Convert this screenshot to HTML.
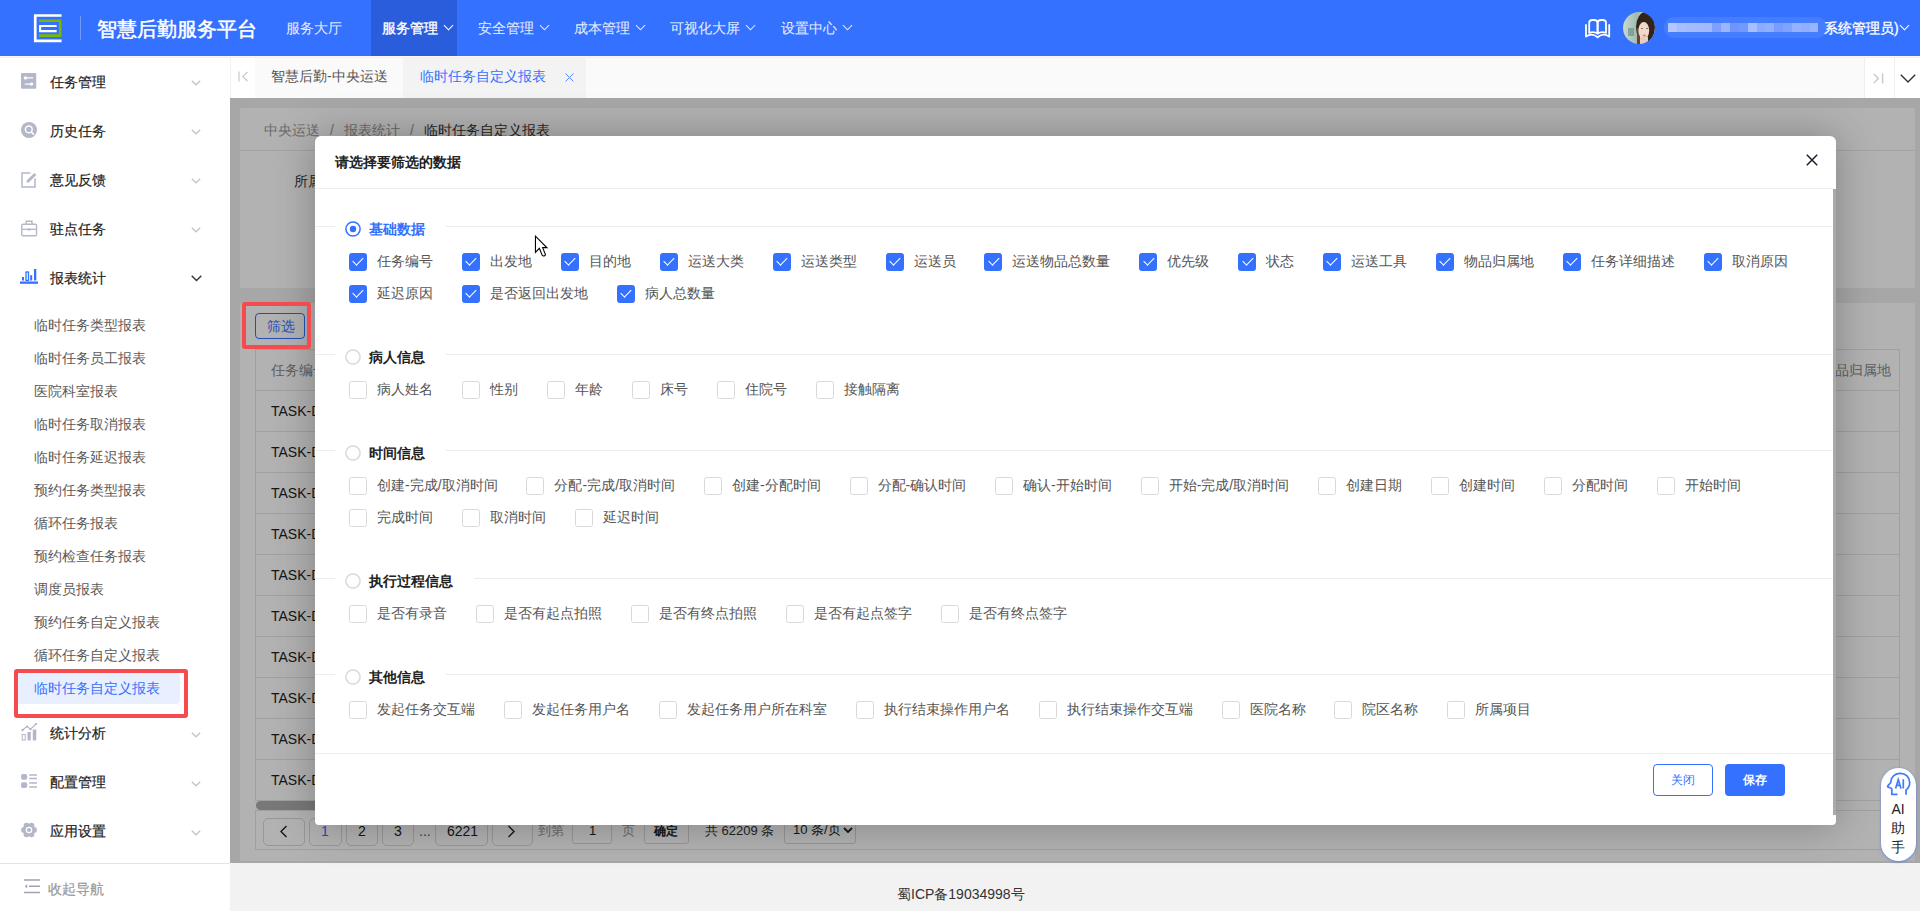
<!DOCTYPE html>
<html><head><meta charset="utf-8">
<style>
*{box-sizing:border-box;margin:0;padding:0}
html,body{width:1920px;height:911px;overflow:hidden;background:#fff;font-family:"Liberation Sans",sans-serif;font-size:14px;color:#333}
.abs{position:absolute}
.t{position:absolute;white-space:nowrap;line-height:1}
/* header */
#hdr{position:absolute;left:0;top:0;width:1920px;height:56px;background:#3471ff}
.nav{position:absolute;top:21px;font-size:14px;line-height:14px;color:rgba(255,255,255,.85);white-space:nowrap;-webkit-text-stroke:0.15px rgba(255,255,255,.6)}
.chev{position:absolute;width:7px;height:7px;border-right:1.5px solid currentColor;border-bottom:1.5px solid currentColor;transform:rotate(45deg)}
/* sidebar */
#side{position:absolute;left:0;top:56px;width:230px;height:855px;background:#fff}
.mi{position:absolute;left:50px;font-size:14px;line-height:14px;color:#222;white-space:nowrap;-webkit-text-stroke-width:0.2px}
.si{position:absolute;left:34px;font-size:14px;line-height:14px;color:#5a5a5a;white-space:nowrap}
.mchev{position:absolute;left:193px;width:7px;height:7px;border-right:1px solid #c4c4c4;border-bottom:1px solid #c4c4c4;transform:rotate(45deg)}
/* tabs */
#tabs{position:absolute;left:230px;top:56px;width:1690px;height:42px;background:#fafafa}
/* main */
#main{position:absolute;left:230px;top:98px;width:1690px;height:765px;background:#f0f0f0}
.card{position:absolute;background:#fff;border-radius:2px}
#foot{position:absolute;left:230px;top:863px;width:1690px;height:48px;background:#f2f2f2}
#mask{position:absolute;left:230px;top:98px;width:1690px;height:765px;background:rgba(0,0,0,.3)}
/* dialog */
#dlg{position:absolute;left:315px;top:136px;width:1521px;height:689px;background:#fff;border-radius:6px 6px 4px 4px;box-shadow:0 0 42px rgba(0,0,0,.28)}
.sec{position:absolute;left:0;width:1518px;height:1px;background:#ececec}
.sec .lbl{position:absolute;left:20px;top:-8px;height:16px;background:#fff;padding:0 20px 0 10px}
.radio{position:absolute;left:31px;width:15px;height:15px;border-radius:50%;border:1.6px solid #d9d9d9;background:#fff}
.radio.on{border-color:#3471ff;border-width:1.8px}
.radio.on:after{content:"";position:absolute;left:2.7px;top:2.7px;width:6px;height:6px;border-radius:50%;background:#3471ff}
.stitle{position:absolute;left:54px;font-size:14px;line-height:14px;font-weight:bold;color:#222;white-space:nowrap}
.grp{position:absolute;left:34px;width:1480px;display:flex;flex-wrap:wrap;row-gap:14px}
.ck{display:flex;align-items:center;height:18px;margin-right:28.92px;white-space:nowrap;font-size:14px;color:#555}
.box{width:18px;height:18px;border:1px solid #d9d9d9;border-radius:2.5px;margin-right:10px;position:relative;flex:none;background:#fff}
.ck.on .box{background:#3471ff;border-color:#3471ff}
.ck.on .box:after{content:"";position:absolute;left:5.3px;top:0.9px;width:5px;height:8.8px;border-right:1.5px solid #fff;border-bottom:1.5px solid #fff;transform:rotate(45deg)}
.btn{position:absolute;height:32px;width:60px;border-radius:4px;font-size:12px;line-height:30px;text-align:center}
</style></head><body>

<!-- HEADER -->
<div id="hdr">
  <svg class="abs" style="left:33px;top:14px" width="30" height="29" viewBox="0 0 30 29">
    <path d="M28.6 1.5H2.25V26.85H28.6" fill="none" stroke="#fff" stroke-width="2.7"/>
    <path d="M6 6.75H27.2V21.6H6" fill="none" stroke="#7ab800" stroke-width="2.6"/>
    <path d="M23.65 12H7.1V17.15H23.65" fill="none" stroke="#fff" stroke-width="2.1"/>
  </svg>
  <div class="abs" style="left:80px;top:16px;width:1px;height:24px;background:rgba(255,255,255,.3)"></div>
  <div class="t" style="left:97px;top:19px;font-size:20px;color:#fff;-webkit-text-stroke:0.5px #fff">智慧后勤服务平台</div>
  <div class="nav" style="left:286px">服务大厅</div>
  <div class="abs" style="left:371px;top:0;width:86px;height:56px;background:#2a5ddb"></div>
  <div class="nav" style="left:382px;color:#fff;-webkit-text-stroke:0.35px #fff">服务管理</div><div class="chev" style="left:445px;top:22px;color:#fff"></div>
  <div class="nav" style="left:478px">安全管理</div><div class="chev" style="left:541px;top:22px;color:rgba(255,255,255,.85)"></div>
  <div class="nav" style="left:574px">成本管理</div><div class="chev" style="left:637px;top:22px;color:rgba(255,255,255,.85)"></div>
  <div class="nav" style="left:670px">可视化大屏</div><div class="chev" style="left:747px;top:22px;color:rgba(255,255,255,.85)"></div>
  <div class="nav" style="left:781px">设置中心</div><div class="chev" style="left:844px;top:22px;color:rgba(255,255,255,.85)"></div>

  <svg class="abs" style="left:1580px;top:14px" width="36" height="28" viewBox="0 0 36 28">
    <path d="M6 10.2V22.6C9.5 20 13.5 19.8 17.6 23.2C21.7 19.8 25.7 20 29.2 22.6V10.2" fill="none" stroke="#fff" stroke-width="1.8" stroke-linejoin="round"/>
    <path d="M9.2 18.8V8.6C9.2 6.8 10.6 6 12.5 6H14C16.2 6 17.6 7 17.6 8.8V19.6C15.2 18 12 17.8 9.2 18.8Z" fill="none" stroke="#fff" stroke-width="1.8" stroke-linejoin="round"/>
    <path d="M26 18.8V8.6C26 6.8 24.6 6 22.7 6H21.2C19 6 17.6 7 17.6 8.8V19.6C20 18 23.2 17.8 26 18.8Z" fill="none" stroke="#fff" stroke-width="1.8" stroke-linejoin="round"/>
  </svg>
  <svg class="abs" style="left:1623px;top:12px" width="32" height="32" viewBox="0 0 32 32">
    <defs><clipPath id="av"><circle cx="16" cy="16" r="16"/></clipPath>
    <linearGradient id="avbg" x1="0" y1="0" x2="1" y2="0"><stop offset="0" stop-color="#c9d9d2"/><stop offset=".45" stop-color="#9fbab0"/><stop offset=".6" stop-color="#c4d2cf"/></linearGradient></defs>
    <g clip-path="url(#av)"><g style="filter:blur(.6px)">
      <rect width="32" height="32" fill="url(#avbg)"/>
      <rect x="5" y="16" width="6" height="8" fill="#5f8c80" opacity=".6"/>
      <ellipse cx="22.5" cy="15" rx="9.5" ry="15" fill="#33241b"/>
      <rect x="14" y="16" width="4" height="16" fill="#6a4328"/>
      <ellipse cx="20.8" cy="18.5" rx="5.4" ry="8.5" fill="#efd9c9"/>
      <rect x="17" y="25" width="8" height="7" fill="#e9cdb8"/>
      <ellipse cx="19" cy="16.5" rx="1" ry=".6" fill="#6b5048"/><ellipse cx="24" cy="16.5" rx="1" ry=".6" fill="#6b5048"/>
      <ellipse cx="21.3" cy="23.5" rx="1.8" ry="1" fill="#d98a8a"/>
    </g></g>
  </svg>
  <div class="abs" style="left:1664px;top:17px;width:163px;height:21px;border-radius:10px;background:rgba(255,255,255,.09)"></div>
  <div class="abs" style="left:1668.00px;top:22.9px;width:8.9px;height:8.9px;background:#b4c6ff"></div>
  <div class="abs" style="left:1676.85px;top:22.9px;width:8.9px;height:8.9px;background:#a6bdff"></div>
  <div class="abs" style="left:1685.70px;top:22.9px;width:8.9px;height:8.9px;background:#a4bbff"></div>
  <div class="abs" style="left:1694.55px;top:22.9px;width:8.9px;height:8.9px;background:#a2baff"></div>
  <div class="abs" style="left:1703.40px;top:22.9px;width:8.9px;height:8.9px;background:#a1b9ff"></div>
  <div class="abs" style="left:1712.25px;top:22.9px;width:8.9px;height:8.9px;background:#7fa0ff"></div>
  <div class="abs" style="left:1721.10px;top:22.9px;width:8.9px;height:8.9px;background:#9bb6ff"></div>
  <div class="abs" style="left:1729.95px;top:22.9px;width:8.9px;height:8.9px;background:#6f94ff"></div>
  <div class="abs" style="left:1738.80px;top:22.9px;width:8.9px;height:8.9px;background:#7398ff"></div>
  <div class="abs" style="left:1747.65px;top:22.9px;width:8.9px;height:8.9px;background:#a5bfff"></div>
  <div class="abs" style="left:1756.50px;top:22.9px;width:8.9px;height:8.9px;background:#8aabff"></div>
  <div class="abs" style="left:1765.35px;top:22.9px;width:8.9px;height:8.9px;background:#8fb0ff"></div>
  <div class="abs" style="left:1774.20px;top:22.9px;width:8.9px;height:8.9px;background:#789cff"></div>
  <div class="abs" style="left:1783.05px;top:22.9px;width:8.9px;height:8.9px;background:#80a3ff"></div>
  <div class="abs" style="left:1791.90px;top:22.9px;width:8.9px;height:8.9px;background:#96b1ff"></div>
  <div class="abs" style="left:1800.75px;top:22.9px;width:8.9px;height:8.9px;background:#90aeff"></div>
  <div class="abs" style="left:1809.60px;top:22.9px;width:8.9px;height:8.9px;background:#98b4ff"></div>
  <div class="t" style="left:1824px;top:21px;font-size:14px;color:#fff;-webkit-text-stroke:0.3px #fff">系统管理员)</div>
  <div class="chev" style="left:1901px;top:22px;color:#fff"></div>
</div>

<!-- SIDEBAR -->
<div id="side">
  <!-- icons: coordinates relative to sidebar top 56 -->
  <svg class="abs" style="left:21px;top:17px" width="16" height="16" viewBox="0 0 16 16">
    <rect x="0" y="0" width="15.2" height="15.7" rx="1.2" fill="#b3b7c8"/>
    <path d="M4 4.9H12M3.8 11.1H11.5" stroke="#fff" stroke-width="1.3"/>
    <circle cx="4.4" cy="4.9" r="1.7" fill="#fff"/><circle cx="10.6" cy="11.1" r="1.7" fill="#fff"/>
  </svg>
  <svg class="abs" style="left:21px;top:66px" width="16" height="16" viewBox="0 0 16 16">
    <circle cx="8" cy="8" r="8" fill="#b3b7c8"/>
    <circle cx="7.8" cy="7.4" r="3.4" fill="none" stroke="#fff" stroke-width="1.5"/>
    <path d="M10.2 9.8L13 12.8" stroke="#fff" stroke-width="1.6"/>
  </svg>
  <svg class="abs" style="left:21px;top:115px" width="17" height="17" viewBox="0 0 17 17">
    <path d="M9.5 2H1V16H14V7.5" fill="none" stroke="#b3b7c8" stroke-width="1.5"/>
    <path d="M5.5 11.8L6 9.2L13.3 1.9L15.3 3.9L8 11.2Z" fill="#b3b7c8"/>
  </svg>
  <svg class="abs" style="left:21px;top:164px" width="17" height="17" viewBox="0 0 17 17">
    <rect x="0.75" y="4.2" width="14.8" height="11.5" rx="1.2" fill="none" stroke="#b3b7c8" stroke-width="1.4"/>
    <path d="M5.2 4.2V1.2H11V4.2" fill="none" stroke="#b3b7c8" stroke-width="1.4"/>
    <path d="M1 9.3H15.5" stroke="#b3b7c8" stroke-width="1.3"/>
    <rect x="6.6" y="8.5" width="3" height="2" fill="#b3b7c8"/>
  </svg>
  <svg class="abs" style="left:20px;top:213px" width="19" height="16" viewBox="0 0 19 16">
    <rect x="2" y="8" width="2" height="3.5" fill="#3471ff"/>
    <rect x="6" y="3" width="2.5" height="8.5" fill="none" stroke="#3471ff" stroke-width="1.3"/>
    <rect x="10.2" y="6.2" width="2" height="5.3" fill="#3471ff"/>
    <rect x="14" y="0" width="2.3" height="11.5" fill="#3471ff"/>
    <rect x="0" y="12.5" width="18" height="2.3" fill="#3471ff"/>
  </svg>
  <svg class="abs" style="left:21px;top:667px" width="17" height="18" viewBox="0 0 17 18">
    <path d="M1.5 7L6 3.5L9.5 6.2L15 1" fill="none" stroke="#b3b7c8" stroke-width="1.1"/>
    <circle cx="1.5" cy="7" r="1.2" fill="#b3b7c8"/><circle cx="6" cy="3.5" r="1.1" fill="#b3b7c8"/><circle cx="9.5" cy="6.2" r="1.1" fill="#b3b7c8"/><circle cx="15" cy="1" r="1.1" fill="#b3b7c8"/>
    <rect x="1.2" y="11.5" width="3" height="5.6" fill="none" stroke="#b3b7c8" stroke-width="1"/>
    <rect x="6.5" y="9" width="3.3" height="8.4" fill="#b3b7c8"/>
    <rect x="11.8" y="6.5" width="3.5" height="10.9" fill="#b3b7c8"/>
  </svg>
  <svg class="abs" style="left:21px;top:718px" width="17" height="15" viewBox="0 0 17 15">
    <rect x="0" y="0" width="6.2" height="5.8" rx="2" fill="#b3b7c8"/><rect x="0" y="8.2" width="6.2" height="5.8" rx="2" fill="#b3b7c8"/>
    <path d="M8.2 0.9H16M8.2 4.6H16M8.2 9H16M8.2 13.1H16" stroke="#b3b7c8" stroke-width="1.5"/>
  </svg>
  <svg class="abs" style="left:21px;top:766px" width="16" height="16" viewBox="0 0 16 16">
    <circle cx="13.00" cy="8.00" r="2.9" fill="#b3b7c8"/><circle cx="10.50" cy="12.33" r="2.9" fill="#b3b7c8"/><circle cx="5.50" cy="12.33" r="2.9" fill="#b3b7c8"/><circle cx="3.00" cy="8.00" r="2.9" fill="#b3b7c8"/><circle cx="5.50" cy="3.67" r="2.9" fill="#b3b7c8"/><circle cx="10.50" cy="3.67" r="2.9" fill="#b3b7c8"/><circle cx="8" cy="8" r="5.6" fill="#b3b7c8"/>
    <circle cx="8" cy="8" r="2.7" fill="none" stroke="#fff" stroke-width="1.2"/>
  </svg>
  <div class="mi" style="top:19px">任务管理</div>
  <div class="mi" style="top:68px">历史任务</div>
  <div class="mi" style="top:117px">意见反馈</div>
  <div class="mi" style="top:166px">驻点任务</div>
  <div class="mi" style="top:215px">报表统计</div>
  <svg class="abs mch" style="left:191px;top:24px" width="10" height="6"><path d="M0.8 0.8L5 4.8L9.2 0.8" fill="none" stroke="#c4c4c4" stroke-width="1.3"/></svg>
  <svg class="abs mch" style="left:191px;top:73px" width="10" height="6"><path d="M0.8 0.8L5 4.8L9.2 0.8" fill="none" stroke="#c4c4c4" stroke-width="1.3"/></svg>
  <svg class="abs mch" style="left:191px;top:122px" width="10" height="6"><path d="M0.8 0.8L5 4.8L9.2 0.8" fill="none" stroke="#c4c4c4" stroke-width="1.3"/></svg>
  <svg class="abs mch" style="left:191px;top:171px" width="10" height="6"><path d="M0.8 0.8L5 4.8L9.2 0.8" fill="none" stroke="#c4c4c4" stroke-width="1.3"/></svg>
  <svg class="abs mch" style="left:191px;top:219px" width="11" height="7"><path d="M0.7 0.7L5.5 5.5L10.3 0.7" fill="none" stroke="#333" stroke-width="1.4"/></svg>
  <div class="si" style="top:262px">临时任务类型报表</div>
  <div class="si" style="top:295px">临时任务员工报表</div>
  <div class="si" style="top:328px">医院科室报表</div>
  <div class="si" style="top:361px">临时任务取消报表</div>
  <div class="si" style="top:394px">临时任务延迟报表</div>
  <div class="si" style="top:427px">预约任务类型报表</div>
  <div class="si" style="top:460px">循环任务报表</div>
  <div class="si" style="top:493px">预约检查任务报表</div>
  <div class="si" style="top:526px">调度员报表</div>
  <div class="si" style="top:559px">预约任务自定义报表</div>
  <div class="si" style="top:592px">循环任务自定义报表</div>
  <div class="abs" style="left:18px;top:617px;width:162px;height:31px;background:#e8efff;border-radius:0 4px 4px 0"></div>
  <div class="si" style="top:625px;color:#3471ff">临时任务自定义报表</div>
  <div class="mi" style="top:670px">统计分析</div>
  <div class="mi" style="top:719px">配置管理</div>
  <div class="mi" style="top:768px">应用设置</div>
  <svg class="abs mch" style="left:191px;top:676px" width="10" height="6"><path d="M0.8 0.8L5 4.8L9.2 0.8" fill="none" stroke="#c4c4c4" stroke-width="1.3"/></svg>
  <svg class="abs mch" style="left:191px;top:725px" width="10" height="6"><path d="M0.8 0.8L5 4.8L9.2 0.8" fill="none" stroke="#c4c4c4" stroke-width="1.3"/></svg>
  <svg class="abs mch" style="left:191px;top:774px" width="10" height="6"><path d="M0.8 0.8L5 4.8L9.2 0.8" fill="none" stroke="#c4c4c4" stroke-width="1.3"/></svg>
  <div class="abs" style="left:0;top:807px;width:230px;height:1px;background:#e4e4e4"></div>
  <svg class="abs" style="left:24px;top:823px" width="16" height="15" viewBox="0 0 16 15">
    <path d="M0 1H16M5 7.3H16M0 13.6H16" stroke="#a0a4b0" stroke-width="1.5"/>
    <path d="M3.2 5.3L0.6 7.3L3.2 9.3Z" fill="#a0a4b0"/>
  </svg>
  <div class="mi" style="left:48px;top:826px;color:#999">收起导航</div>
</div>

<!-- TABS -->
<div id="tabs">
  <div class="abs" style="left:0;top:0;width:25px;height:42px;background:#fff;border-left:1px solid #f2f2f2"></div>
  <svg class="abs" style="left:8px;top:15px" width="11" height="11" viewBox="0 0 11 11"><path d="M1 0.5V10.5" stroke="#c8c8c8" stroke-width="1.2"/><path d="M9.5 0.8L4.8 5.5L9.5 10.2" fill="none" stroke="#c8c8c8" stroke-width="1.2"/></svg>
  <div class="t" style="left:41px;top:13px;font-size:14px;color:#555">智慧后勤-中央运送</div>
  <div class="abs" style="left:173px;top:0;width:183px;height:42px;background:#f3f3f3"></div>
  <div class="t" style="left:190px;top:13px;font-size:14px;color:#3471ff">临时任务自定义报表</div>
  <svg class="abs" style="left:335px;top:17px" width="9" height="9" viewBox="0 0 9 9"><path d="M0.5 0.5L8.5 8.5M8.5 0.5L0.5 8.5" stroke="#5b8cff" stroke-width="1"/></svg>
  <div class="abs" style="left:1634px;top:0;width:56px;height:42px;background:#fff;border-left:1px solid #eeeeee"></div>
  <div class="abs" style="left:1664px;top:0;width:1px;height:42px;background:#eeeeee"></div>
  <svg class="abs" style="left:1643px;top:16.5px" width="11" height="11" viewBox="0 0 11 11"><path d="M9.6 0.5V10.5" stroke="#cacaca" stroke-width="1.5"/><path d="M0.9 0.9L5.3 5.5L0.9 10.1" fill="none" stroke="#cacaca" stroke-width="1.5"/></svg>
  <svg class="abs" style="left:1670px;top:17.6px" width="16" height="9" viewBox="0 0 16 9"><path d="M0.8 0.8L8 8L15.2 0.8" fill="none" stroke="#333" stroke-width="1.4"/></svg>
</div>

<div class="abs" style="left:0;top:56px;width:1920px;height:1px;background:#fcf8f1"></div><div class="abs" style="left:0;top:57px;width:1920px;height:1px;background:#f1f1f1"></div>
<!-- MAIN -->
<div id="main">
  <div class="card" style="left:10px;top:10px;width:1675px;height:180px">
    <div class="t" style="left:24px;top:15px;color:#999">中央运送</div>
    <div class="t" style="left:90px;top:15px;color:#999">/</div>
    <div class="t" style="left:104px;top:15px;color:#999">报表统计</div>
    <div class="t" style="left:170px;top:15px;color:#999">/</div>
    <div class="t" style="left:184px;top:15px;color:#333">临时任务自定义报表</div>
    <div class="abs" style="left:0;top:42px;width:1675px;height:1px;background:#eaeaea"></div>
    <div class="t" style="left:54px;top:66px;color:#333">所属项目</div>
  </div>
  <div class="card" style="left:10px;top:205px;width:1675px;height:558px">
    <div class="abs" style="left:15px;top:10px;width:50px;height:26px;border:1px solid #3471ff;border-radius:4px"></div>
    <div class="t" style="left:27px;top:16px;color:#3471ff">筛选</div>
  </div>
  <div class="abs" style="left:25px;top:251px;width:1644.5px;height:452px;border:1px solid #e6e6e6;border-bottom:none"></div>
  <div class="abs" style="left:26px;top:292px;width:1643px;height:1px;background:#e6e6e6"></div>
  <div class="abs" style="left:26px;top:333px;width:1643px;height:1px;background:#e6e6e6"></div>
  <div class="abs" style="left:26px;top:374px;width:1643px;height:1px;background:#e6e6e6"></div>
  <div class="abs" style="left:26px;top:415px;width:1643px;height:1px;background:#e6e6e6"></div>
  <div class="abs" style="left:26px;top:456px;width:1643px;height:1px;background:#e6e6e6"></div>
  <div class="abs" style="left:26px;top:497px;width:1643px;height:1px;background:#e6e6e6"></div>
  <div class="abs" style="left:26px;top:538px;width:1643px;height:1px;background:#e6e6e6"></div>
  <div class="abs" style="left:26px;top:579px;width:1643px;height:1px;background:#e6e6e6"></div>
  <div class="abs" style="left:26px;top:620px;width:1643px;height:1px;background:#e6e6e6"></div>
  <div class="abs" style="left:26px;top:661px;width:1643px;height:1px;background:#e6e6e6"></div>
  <div class="abs" style="left:26px;top:702px;width:1643px;height:1px;background:#e6e6e6"></div>
  <div class="t" style="left:41px;top:265px;color:#888">任务编号</div>
  <div class="t" style="left:1591px;top:265px;color:#888">物品归属地</div>
  <div class="t" style="left:41px;top:306px;color:#222">TASK-D202401010000</div>
  <div class="t" style="left:41px;top:347px;color:#222">TASK-D202401010001</div>
  <div class="t" style="left:41px;top:388px;color:#222">TASK-D202401010002</div>
  <div class="t" style="left:41px;top:429px;color:#222">TASK-D202401010003</div>
  <div class="t" style="left:41px;top:470px;color:#222">TASK-D202401010004</div>
  <div class="t" style="left:41px;top:511px;color:#222">TASK-D202401010005</div>
  <div class="t" style="left:41px;top:552px;color:#222">TASK-D202401010006</div>
  <div class="t" style="left:41px;top:593px;color:#222">TASK-D202401010007</div>
  <div class="t" style="left:41px;top:634px;color:#222">TASK-D202401010008</div>
  <div class="t" style="left:41px;top:675px;color:#222">TASK-D202401010009</div>
  <div class="abs" style="left:26px;top:703px;width:400px;height:9px;border-radius:5px;background:#acacac"></div><div class="abs" style="left:26px;top:712px;width:1643px;height:1px;background:#e6e6e6"></div>
  <div class="abs" style="left:25px;top:712px;width:1644.5px;height:40px;border:1px solid #e6e6e6;border-top:none"></div>
  <div class="abs" style="left:33px;top:720px;width:42px;height:28px;border:1px solid #d9d9d9;border-radius:5px"></div>
  <svg class="abs" style="left:49px;top:727px" width="9" height="13"><path d="M7.5 1L2 6.5L7.5 12" fill="none" stroke="#222" stroke-width="1.4"/></svg>
  <div class="abs" style="left:79px;top:720px;width:33px;height:28px;border:1px solid #d9d9d9;border-radius:5px"></div>
  <div class="t" style="left:91px;top:726px;color:#3471ff">1</div>
  <div class="abs" style="left:116px;top:720px;width:32px;height:28px;border:1px solid #d9d9d9;border-radius:5px"></div>
  <div class="t" style="left:128px;top:726px;color:#222">2</div>
  <div class="abs" style="left:152px;top:720px;width:32px;height:28px;border:1px solid #d9d9d9;border-radius:5px"></div>
  <div class="t" style="left:164px;top:726px;color:#222">3</div>
  <div class="t" style="left:189px;top:726px;color:#555">...</div>
  <div class="abs" style="left:205px;top:720px;width:53px;height:28px;border:1px solid #d9d9d9;border-radius:5px"></div>
  <div class="t" style="left:217px;top:726px;color:#222">6221</div>
  <div class="abs" style="left:262px;top:720px;width:41px;height:28px;border:1px solid #d9d9d9;border-radius:5px"></div>
  <svg class="abs" style="left:277px;top:727px" width="9" height="13"><path d="M1.5 1L7 6.5L1.5 12" fill="none" stroke="#222" stroke-width="1.4"/></svg>
  <div class="t" style="left:308px;top:726px;font-size:13px;color:#999">到第</div>
  <div class="abs" style="left:342px;top:720px;width:40px;height:26px;border:1px solid #d9d9d9;border-radius:3px"></div>
  <div class="t" style="left:359px;top:726px;font-size:13px;color:#222">1</div>
  <div class="t" style="left:392px;top:726px;font-size:13px;color:#999">页</div>
  <div class="abs" style="left:414px;top:720px;width:45px;height:26px;border:1px solid #d9d9d9;border-radius:3px"></div>
  <div class="t" style="left:424px;top:727px;font-size:12px;color:#222;font-weight:bold">确定</div>
  <div class="t" style="left:475px;top:726px;font-size:13px;color:#333">共 62209 条</div>
  <div class="abs" style="left:554px;top:720px;width:72px;height:26px;border:1px solid #d9d9d9;border-radius:3px"></div>
  <div class="t" style="left:563px;top:725px;font-size:13px;color:#222">10 条/页</div>
  <svg class="abs" style="left:613px;top:729px" width="10" height="7"><path d="M1 1L5 5L9 1" fill="none" stroke="#222" stroke-width="1.8"/></svg>
</div>
<div id="foot"><div class="t" style="left:667px;top:24px;font-size:14px;color:#333">蜀ICP备19034998号</div></div>
<div id="mask"></div>

<!-- DIALOG -->
<div id="dlg">
  <div class="t" style="left:20px;top:19px;font-weight:bold;color:#222">请选择要筛选的数据</div>
  <svg class="abs" style="left:1491px;top:18px" width="12" height="12" viewBox="0 0 12 12"><path d="M0.8 0.8L11.2 11.2M11.2 0.8L0.8 11.2" stroke="#1d1d2b" stroke-width="1.5"/></svg>
  <div class="abs" style="left:0;top:52px;width:1518px;height:1px;background:#ececec"></div>
  <div class="abs" style="left:1518px;top:53px;width:3px;height:626px;background:#a9a9a9"></div>
  <div class="abs" style="left:0;top:90px;width:20px;height:1px;background:#ededed"></div>
  <div class="abs" style="left:130.5px;top:90px;width:1387.5px;height:1px;background:#ededed"></div>
  <svg class="abs" style="left:30.1px;top:84.85px" width="16" height="16" viewBox="0 0 16 16"><circle cx="8" cy="8" r="7.1" fill="#fff" stroke="#3471ff" stroke-width="1.5"/><circle cx="8" cy="8" r="3.2" fill="#3471ff"/></svg>
  <div class="stitle" style="top:86px;color:#3471ff">基础数据</div>
  <div class="grp" style="top:117px"><div class="ck on"><span class="box"></span>任务编号</div><div class="ck on"><span class="box"></span>出发地</div><div class="ck on"><span class="box"></span>目的地</div><div class="ck on"><span class="box"></span>运送大类</div><div class="ck on"><span class="box"></span>运送类型</div><div class="ck on"><span class="box"></span>运送员</div><div class="ck on"><span class="box"></span>运送物品总数量</div><div class="ck on"><span class="box"></span>优先级</div><div class="ck on"><span class="box"></span>状态</div><div class="ck on"><span class="box"></span>运送工具</div><div class="ck on"><span class="box"></span>物品归属地</div><div class="ck on"><span class="box"></span>任务详细描述</div><div class="ck on"><span class="box"></span>取消原因</div><div class="ck on"><span class="box"></span>延迟原因</div><div class="ck on"><span class="box"></span>是否返回出发地</div><div class="ck on"><span class="box"></span>病人总数量</div></div>
  <div class="abs" style="left:0;top:218px;width:20px;height:1px;background:#ededed"></div>
  <div class="abs" style="left:130.5px;top:218px;width:1387.5px;height:1px;background:#ededed"></div>
  <svg class="abs" style="left:30.1px;top:212.85px" width="16" height="16" viewBox="0 0 16 16"><circle cx="8" cy="8" r="7.1" fill="#fff" stroke="#d9d9d9" stroke-width="1.5"/></svg>
  <div class="stitle" style="top:214px;">病人信息</div>
  <div class="grp" style="top:245px"><div class="ck"><span class="box"></span>病人姓名</div><div class="ck"><span class="box"></span>性别</div><div class="ck"><span class="box"></span>年龄</div><div class="ck"><span class="box"></span>床号</div><div class="ck"><span class="box"></span>住院号</div><div class="ck"><span class="box"></span>接触隔离</div></div>
  <div class="abs" style="left:0;top:314px;width:20px;height:1px;background:#ededed"></div>
  <div class="abs" style="left:130.5px;top:314px;width:1387.5px;height:1px;background:#ededed"></div>
  <svg class="abs" style="left:30.1px;top:308.85px" width="16" height="16" viewBox="0 0 16 16"><circle cx="8" cy="8" r="7.1" fill="#fff" stroke="#d9d9d9" stroke-width="1.5"/></svg>
  <div class="stitle" style="top:310px;">时间信息</div>
  <div class="grp" style="top:341px"><div class="ck"><span class="box"></span>创建-完成/取消时间</div><div class="ck"><span class="box"></span>分配-完成/取消时间</div><div class="ck"><span class="box"></span>创建-分配时间</div><div class="ck"><span class="box"></span>分配-确认时间</div><div class="ck"><span class="box"></span>确认-开始时间</div><div class="ck"><span class="box"></span>开始-完成/取消时间</div><div class="ck"><span class="box"></span>创建日期</div><div class="ck"><span class="box"></span>创建时间</div><div class="ck"><span class="box"></span>分配时间</div><div class="ck"><span class="box"></span>开始时间</div><div class="ck"><span class="box"></span>完成时间</div><div class="ck"><span class="box"></span>取消时间</div><div class="ck"><span class="box"></span>延迟时间</div></div>
  <div class="abs" style="left:0;top:442px;width:20px;height:1px;background:#ededed"></div>
  <div class="abs" style="left:158.5px;top:442px;width:1359.5px;height:1px;background:#ededed"></div>
  <svg class="abs" style="left:30.1px;top:436.85px" width="16" height="16" viewBox="0 0 16 16"><circle cx="8" cy="8" r="7.1" fill="#fff" stroke="#d9d9d9" stroke-width="1.5"/></svg>
  <div class="stitle" style="top:438px;">执行过程信息</div>
  <div class="grp" style="top:469px"><div class="ck"><span class="box"></span>是否有录音</div><div class="ck"><span class="box"></span>是否有起点拍照</div><div class="ck"><span class="box"></span>是否有终点拍照</div><div class="ck"><span class="box"></span>是否有起点签字</div><div class="ck"><span class="box"></span>是否有终点签字</div></div>
  <div class="abs" style="left:0;top:538px;width:20px;height:1px;background:#ededed"></div>
  <div class="abs" style="left:130.5px;top:538px;width:1387.5px;height:1px;background:#ededed"></div>
  <svg class="abs" style="left:30.1px;top:532.85px" width="16" height="16" viewBox="0 0 16 16"><circle cx="8" cy="8" r="7.1" fill="#fff" stroke="#d9d9d9" stroke-width="1.5"/></svg>
  <div class="stitle" style="top:534px;">其他信息</div>
  <div class="grp" style="top:565px"><div class="ck"><span class="box"></span>发起任务交互端</div><div class="ck"><span class="box"></span>发起任务用户名</div><div class="ck"><span class="box"></span>发起任务用户所在科室</div><div class="ck"><span class="box"></span>执行结束操作用户名</div><div class="ck"><span class="box"></span>执行结束操作交互端</div><div class="ck"><span class="box"></span>医院名称</div><div class="ck"><span class="box"></span>院区名称</div><div class="ck"><span class="box"></span>所属项目</div></div>
  <div class="abs" style="left:0;top:617px;width:1518px;height:1px;background:#ececec"></div>
  <div class="btn" style="left:1338px;top:628px;border:1px solid #3471ff;color:#3471ff;background:#fff">关闭</div>
  <div class="btn" style="left:1410px;top:628px;background:#3471ff;color:#fff;font-weight:bold;line-height:32px">保存</div>
</div>

<!-- annotations / overlays -->
<div class="abs" style="left:14px;top:669px;width:174px;height:49px;border:4px solid #f64b4e;border-radius:3px"></div>
<div class="abs" style="left:242px;top:302px;width:69px;height:47px;border:4px solid #f64b4e;border-radius:3px"></div>
<div class="abs" style="left:1880.5px;top:768px;width:35px;height:93px;border-radius:18px;background:#fff;box-shadow:0 1px 3px rgba(51,112,255,.55),0 0 1px rgba(51,112,255,.5)">
  <svg class="abs" style="left:1.5px;top:0" width="32" height="32" viewBox="0 0 32 32">
    <path d="M15.5 26.3H9.8V21.2C9.8 20.5 9.3 20.2 8.6 20L6.3 19.2C5.6 18.9 5.5 18.2 6 17.6L8.4 15C8.8 14.6 8.9 14 8.9 13.4C9.3 8.6 13.2 5.3 18.3 5.3C23.6 5.3 27.7 9.4 27.7 14.5C27.7 17.5 26.4 20.2 24 22.2V26.7" fill="none" stroke="#3f7bff" stroke-width="1.75" stroke-linejoin="round"/>
    <path d="M13.6 20.4L16.3 11.6L19 20.4M14.5 17.4H18.1M21.3 11.2V20.4" fill="none" stroke="#3f7bff" stroke-width="1.7"/>
  </svg>
  <div class="abs" style="left:0;width:35px;top:32px;text-align:center;font-size:14px;line-height:19px;color:#222">AI<br>助<br>手</div>
</div>
<svg class="abs" style="left:534px;top:235px" width="14" height="23" viewBox="0 0 14 23"><path d="M1.45 1.20L1.45 17.40L5.35 13.30L8.25 20.40L9.95 21.20L11.55 19.80L8.65 12.60L12.75 12.60Z" fill="#fff" stroke="#000" stroke-width="1.1" stroke-linejoin="miter"/></svg>
</body></html>
